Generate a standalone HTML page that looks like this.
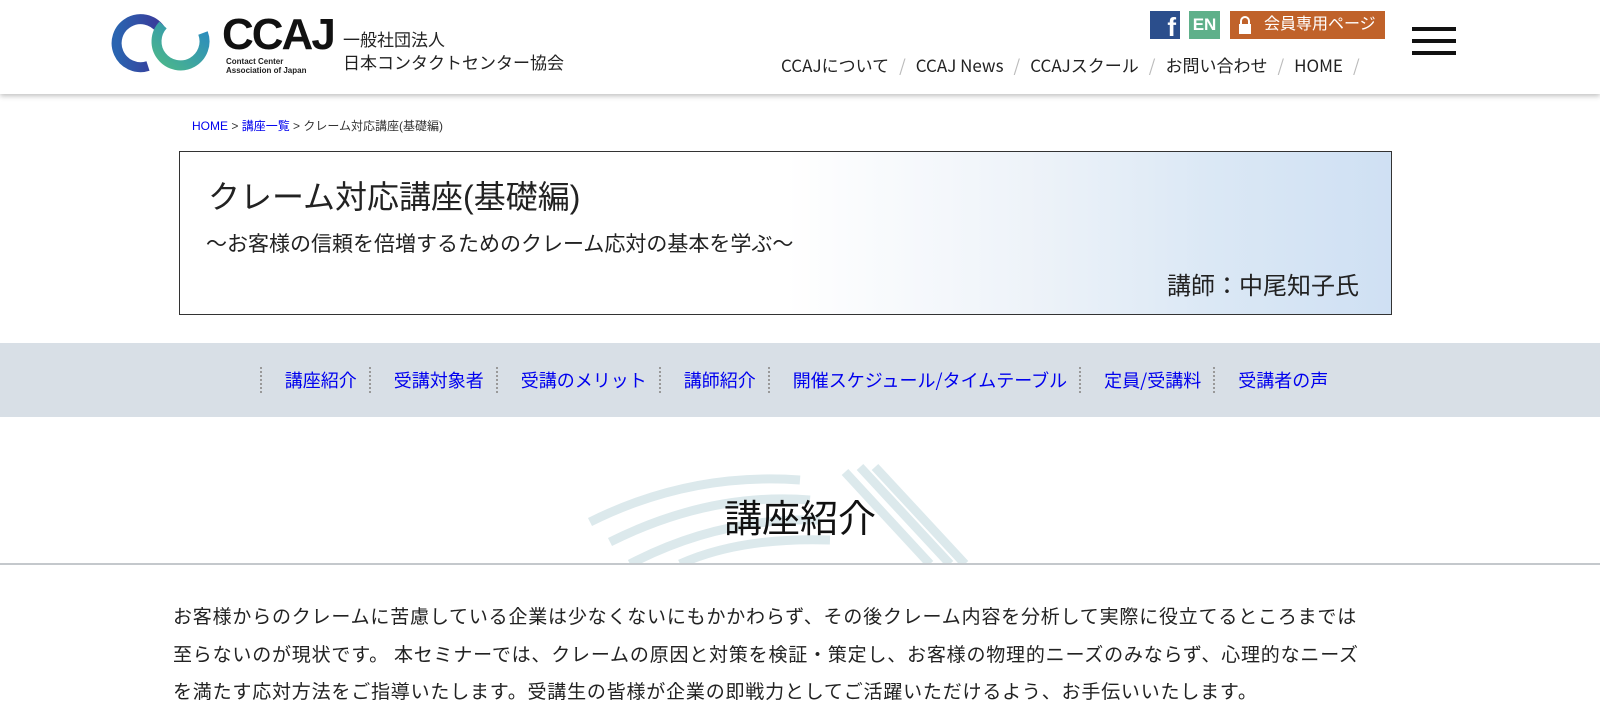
<!DOCTYPE html>
<html><head><meta charset="utf-8"><style>
*{margin:0;padding:0;box-sizing:border-box}
html,body{width:1600px;height:722px;overflow:hidden}
body{background:#fff;font-family:"Liberation Sans","Noto Sans CJK JP",sans-serif;color:#222;position:relative}
.a{position:absolute}
header{position:absolute;left:0;top:0;width:1600px;height:94px;background:#fff;box-shadow:0 2px 5px rgba(0,0,0,.25)}
.nav{font-family:"Noto Sans CJK JP",sans-serif}
.nav a{color:#222;text-decoration:none}
.sep{color:#bbb;margin:0 10px}
.gnav{position:absolute;left:0;top:343px;width:1600px;height:74px;background:#d8dfe6;display:flex;justify-content:center;align-items:center;font-size:18px;font-family:"Noto Sans CJK JP",sans-serif}
.gnav span{color:#0000ee;padding:0 12px 0 23px;border-left:2px dotted #999;line-height:26px}
</style></head><body>
<header>
<svg class="a" style="left:108px;top:13px" width="105" height="62" viewBox="0 0 105 62">
<defs><linearGradient id="g1" x1="0" x2="1"><stop offset="0" stop-color="#2a64b0"/><stop offset="1" stop-color="#3a3a9a"/></linearGradient>
<linearGradient id="g2" x1="0" x2="1" y1="1" y2="0"><stop offset="0" stop-color="#4cb88a"/><stop offset="1" stop-color="#2a8ac0"/></linearGradient></defs>
<path d="M52 16 A24 24 0 1 0 40 53" fill="none" stroke="url(#g1)" stroke-width="10"/>
<path d="M95 20 A24 24 0 1 1 55 12" fill="none" stroke="url(#g2)" stroke-width="10"/>
</svg>
<div class="a" style="left:222px;top:10px;font-size:44px;font-weight:bold;letter-spacing:-2px;color:#111">CCAJ</div>
<div class="a" style="left:226px;top:57px;font-size:8px;font-weight:bold;line-height:9px;color:#222">Contact Center<br>Association of Japan</div>
<div class="a" style="left:343px;top:29px;font-size:17px;line-height:23px;color:#222">一般社団法人<br>日本コンタクトセンター協会</div>
<div class="a" style="left:1150px;top:11px;width:30px;height:28px;background:#2b4e8c;color:#fff;font-weight:bold;font-size:26px;text-align:right;padding-right:4px;line-height:32px;overflow:hidden">f</div>
<div class="a" style="left:1189px;top:11px;width:31px;height:28px;background:#5fb08a;color:#fff;font-weight:bold;font-size:17px;text-align:center;line-height:28px">EN</div>
<div class="a" style="left:1230px;top:11px;width:155px;height:28px;background:#c0622a;color:#fff;font-size:16px;line-height:28px;padding-left:34px">会員専用ページ</div>
<svg class="a" style="left:1237px;top:15px" width="16" height="20"><path d="M4 9V6a4 4 0 0 1 8 0v3" fill="none" stroke="#fff" stroke-width="2"/><rect x="2" y="9" width="12" height="10" fill="#fff"/></svg>
<div class="a nav" style="left:781px;top:53px;font-size:17px;line-height:24px"><a>CCAJについて</a><span class="sep">/</span><a>CCAJ News</a><span class="sep">/</span><a>CCAJスクール</a><span class="sep">/</span><a>お問い合わせ</a><span class="sep">/</span><a>HOME</a><span class="sep">/</span></div>
<div class="a" style="left:1412px;top:27px;width:44px;height:4px;background:#111"></div>
<div class="a" style="left:1412px;top:39px;width:44px;height:4px;background:#111"></div>
<div class="a" style="left:1412px;top:51px;width:44px;height:4px;background:#111"></div>
</header>
<div class="a" style="left:192px;top:117px;font-size:12px;color:#333"><span style="color:#0000ee">HOME</span> &gt; <span style="color:#0000ee">講座一覧</span> &gt; クレーム対応講座(基礎編)</div>
<div class="a" style="left:179px;top:151px;width:1213px;height:164px;border:1px solid #333;background:linear-gradient(90deg,#fff 0%,#fff 50%,#eef3f9 70%,#dbe8f5 85%,#cfe0f3 100%)">
<div class="a" style="left:28px;top:20px;font-size:32px;color:#222">クレーム対応講座(基礎編)</div>
<div class="a" style="left:26px;top:76px;font-size:21px;color:#222">～お客様の信頼を倍増するためのクレーム応対の基本を学ぶ～</div>
<div class="a" style="right:32px;top:114px;font-size:24px;color:#222">講師：中尾知子氏</div>
</div>
<div class="gnav"><span>講座紹介</span><span>受講対象者</span><span>受講のメリット</span><span>講師紹介</span><span>開催スケジュール/タイムテーブル</span><span>定員/受講料</span><span>受講者の声</span></div>
<svg class="a" style="left:570px;top:462px" width="400" height="102"><g fill="none" stroke="#dce9ec" stroke-width="9"><path d="M20 60 Q120 10 230 18"/><path d="M40 80 Q140 30 240 38"/><path d="M60 102 Q150 55 250 58"/><path d="M110 102 Q170 75 260 78"/><path d="M290 5 L380 102"/><path d="M305 5 L395 102"/><path d="M275 10 L360 102"/></g></svg>
<div class="a" style="left:0;width:1600px;top:488px;text-align:center;font-size:38px;color:#111">講座紹介</div>
<div class="a" style="left:0;top:563px;width:1600px;height:2px;background:#c4c8cc"></div>
<div class="a" style="left:173px;top:597px;width:1350px;white-space:nowrap;font-size:19px;letter-spacing:0.8px;line-height:37.5px;color:#222;font-family:'Noto Sans CJK JP',sans-serif">お客様からのクレームに苦慮している企業は少なくないにもかかわらず、その後クレーム内容を分析して実際に役立てるところまでは<br>至らないのが現状です。 本セミナーでは、クレームの原因と対策を検証・策定し、お客様の物理的ニーズのみならず、心理的なニーズ<br>を満たす応対方法をご指導いたします。受講生の皆様が企業の即戦力としてご活躍いただけるよう、お手伝いいたします。</div>
</body></html>
